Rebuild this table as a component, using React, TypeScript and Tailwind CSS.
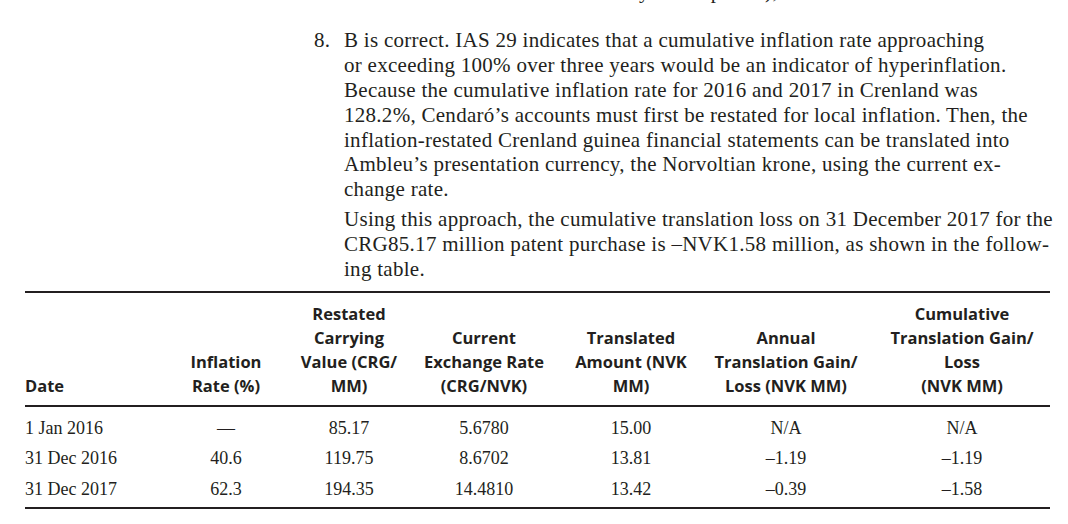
const serif = "font-['Liberation_Serif',serif]";
const sans = "font-['Open_Sans',sans-serif]";

const answerLines = [
    'B is correct. IAS 29 indicates that a cumulative inflation rate approaching',
    'or exceeding 100% over three years would be an indicator of hyperinflation.',
    'Because the cumulative inflation rate for 2016 and 2017 in Crenland was',
    '128.2%, Cendaró’s accounts must first be restated for local inflation. Then, the',
    'inflation-restated Crenland guinea financial statements can be translated into',
    'Ambleu’s presentation currency, the Norvoltian krone, using the current ex-',
    'change rate.',
];

const approachLines = [
    'Using this approach, the cumulative translation loss on 31 December 2017 for the',
    'CRG85.17 million patent purchase is –NVK1.58 million, as shown in the follow-',
    'ing table.',
];

const headers = [
    ['Date'],
    ['Inflation', 'Rate (%)'],
    ['Restated', 'Carrying', 'Value (CRG/', 'MM)'],
    ['Current', 'Exchange Rate', '(CRG/NVK)'],
    ['Translated', 'Amount (NVK', 'MM)'],
    ['Annual', 'Translation Gain/', 'Loss (NVK MM)'],
    ['Cumulative', 'Translation Gain/', 'Loss', '(NVK MM)'],
];

const rows = [
    ['1 Jan 2016', '—', '85.17', '5.6780', '15.00', 'N/A', 'N/A'],
    ['31 Dec 2016', '40.6', '119.75', '8.6702', '13.81', '–1.19', '–1.19'],
    ['31 Dec 2017', '62.3', '194.35', '14.4810', '13.42', '–0.39', '–1.58'],
];

const cols = 'grid grid-cols-[151px_100px_146px_124px_170px_140px_1fr]';

export default function App() {
    return (
        <div className={`flex flex-col w-[1068px] h-[524px] overflow-hidden bg-white text-[#231f20] ${serif}`}>
            <div className="flex flex-col pl-[344px] text-[21px] leading-[24.9px] tracking-[0.28px]">
                <div className="-mt-[21px] whitespace-nowrap">
                    than that of the functional currency of the parent);
                </div>
                <div className="relative mt-[24px]">
                    <span className="absolute -left-[30px] top-0">8.</span>
                    {answerLines.map((l) => (
                        <div key={l} className="whitespace-nowrap">{l}</div>
                    ))}
                </div>
                <div className="mt-[5px]">
                    {approachLines.map((l) => (
                        <div key={l} className="whitespace-nowrap">{l}</div>
                    ))}
                </div>
            </div>

            <div className="ml-[25px] mt-[9px] w-[1025px] border-t-2 border-b-2 border-[#231f20]">
                <div className={`${cols} border-b-2 border-[#231f20] pt-[9px] pb-[7px] ${sans} font-bold text-[16.5px] leading-[24px]`}>
                    {headers.map((h, i) => (
                        <div
                            key={i}
                            className={`flex flex-col justify-end ${i === 0 ? 'items-start' : 'items-center text-center'} ${i === 6 ? 'pl-[18px]' : ''}`}
                        >
                            {h.map((t) => (
                                <div key={t} className="whitespace-nowrap">{t}</div>
                            ))}
                        </div>
                    ))}
                </div>
                <div className="pt-[6px] pb-[3px] text-[18px] leading-[30.5px]">
                    {rows.map((r) => (
                        <div key={r[0]} className={cols}>
                            {r.map((c, i) => (
                                <div
                                    key={i}
                                    className={`whitespace-nowrap ${i === 0 ? 'text-left' : 'text-center'} ${i === 6 ? 'pl-[18px]' : ''}`}
                                >
                                    {c}
                                </div>
                            ))}
                        </div>
                    ))}
                </div>
            </div>
        </div>
    );
}
